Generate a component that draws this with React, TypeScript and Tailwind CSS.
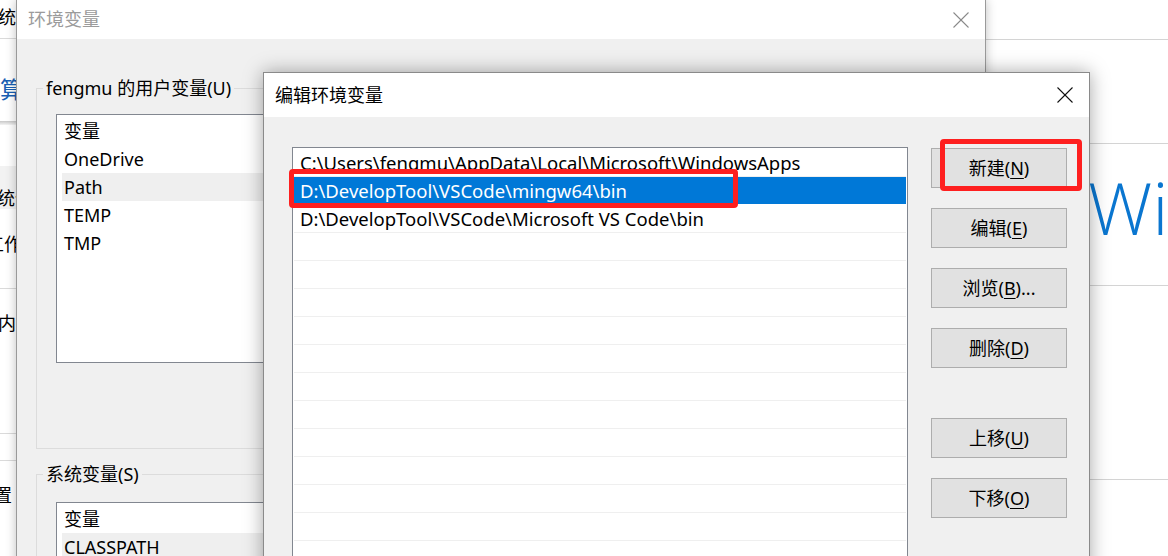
import React from "react";

function CloseX({ color }: { color: string }) {
  return (
    <svg width="16" height="16" viewBox="0 0 16 16" className="block">
      <line x1="0.5" y1="0.5" x2="15.5" y2="15.5" stroke={color} strokeWidth="1.1" />
      <line x1="15.5" y1="0.5" x2="0.5" y2="15.5" stroke={color} strokeWidth="1.1" />
    </svg>
  );
}

function Sidebar() {
  return (
    <div className="w-[16px] shrink-0 overflow-hidden flex flex-col text-[18px] leading-[24px] text-black">
      <div className="h-[39px] shrink-0 flex items-center justify-end whitespace-nowrap border-b border-[#dadada] pb-[4px]">
        系统
      </div>
      <div className="h-[82px] shrink-0 flex items-start pt-[38px] whitespace-nowrap text-[23px] text-[#1a5fb4]">
        算
      </div>
      <div className="h-[4px] shrink-0 bg-gradient-to-b from-[#c8c8c8] to-[#f4f4f4]" />
      <div className="h-[41px] shrink-0" />
      <div className="h-[43px] shrink-0 bg-[#f2f2f2] flex items-start pt-[20px] whitespace-nowrap">
        <span className="ml-[-3px]">统信</span>
      </div>
      <div className="h-[70px] shrink-0 flex items-center whitespace-nowrap">
        <span className="ml-[-14px]">工作</span>
      </div>
      <div className="h-[10px] shrink-0 border-b border-[#dadada]" />
      <div className="h-[68px] shrink-0 flex items-center whitespace-nowrap">
        <span className="ml-[-2px]">内存</span>
      </div>
      <div className="h-[77px] shrink-0 border-b border-[#dadada]" />
      <div className="h-[27px] shrink-0 border-b border-[#dadada]" />
      <div className="h-[68px] shrink-0 flex items-center whitespace-nowrap">
        <span className="ml-[-24px]">设置</span>
      </div>
    </div>
  );
}

function RightBackground() {
  return (
    <div className="flex-1 flex flex-col">
      <div className="h-[40px] shrink-0 border-b border-[#d4d4d4]" />
      <div className="h-[104px] shrink-0 border-b border-[#d4d4d4]" />
      <div className="h-[142px] shrink-0 border-b border-[#d4d4d4] pl-[1072px] pt-[27px] overflow-hidden">
        <div className="text-[72px] leading-[72px] font-light text-[#0a76d0] whitespace-nowrap font-['Open_Sans',sans-serif]">
          Windows 10
        </div>
      </div>
      <div className="h-[194px] shrink-0 border-b border-[#d4d4d4]" />
    </div>
  );
}

function VarList({ rows, selected, height }: { rows: string[]; selected: number; height: number }) {
  return (
    <div
      className="w-[900px] bg-white border border-[#828790] pt-[2px] pl-[5px] overflow-hidden"
      style={{ height }}
    >
      <div className="h-[28px] flex items-center pl-[2px]">变量</div>
      {rows.map((r, i) => (
        <div
          key={r}
          className={
            "h-[28px] flex items-center pl-[2px] " + (i === selected ? "bg-[#efefef]" : "")
          }
        >
          {r}
        </div>
      ))}
    </div>
  );
}

function GroupBox({ label, children, height }: { label: string; children: React.ReactNode; height: number }) {
  return (
    <div className="relative border border-[#dcdcdc] w-[930px]" style={{ height }}>
      <span className="absolute left-[6px] top-[-13px] px-[3px] bg-[#f0f0f0] leading-[24px] whitespace-nowrap">
        {label}
      </span>
      {children}
    </div>
  );
}

function BackWindow() {
  return (
    <div className="absolute left-[16px] top-0 w-[970px] h-[620px] bg-[#f0f0f0] border-l border-r border-[#9a9a9a] shadow-[0_0_10px_rgba(0,0,0,0.25)] flex flex-col text-[18px] text-black">
      <div className="h-[39px] shrink-0 bg-white flex items-center justify-between pl-[11px] pr-[16px]">
        <span className="text-[#9b9b9b]">环境变量</span>
        <CloseX color="#8a8a8a" />
      </div>
      <div className="pl-[19px] pt-[49px] flex flex-col">
        <GroupBox label="fengmu 的用户变量(U)" height={361}>
          <div className="pl-[19px] pt-[25px]">
            <VarList rows={["OneDrive", "Path", "TEMP", "TMP"]} selected={1} height={249} />
          </div>
        </GroupBox>
        <div className="h-[25px]" />
        <GroupBox label="系统变量(S)" height={200}>
          <div className="pl-[19px] pt-[27px]">
            <VarList rows={["CLASSPATH", "ComSpec"]} selected={0} height={160} />
          </div>
        </GroupBox>
      </div>
    </div>
  );
}

function WinButton({ label, mnemonic }: { label: string; mnemonic: string }) {
  const [pre, post] = label.split("(" + mnemonic + ")");
  return (
    <div className="h-[40px] w-[136px] shrink-0 bg-[#e1e1e1] border border-[#adadad] flex items-center justify-center whitespace-nowrap">
      {pre}(<span className="underline underline-offset-[3px] decoration-1">{mnemonic}</span>){post}
    </div>
  );
}

function EditDialog() {
  const paths = [
    "C:\\Users\\fengmu\\AppData\\Local\\Microsoft\\WindowsApps",
    "D:\\DevelopTool\\VSCode\\mingw64\\bin",
    "D:\\DevelopTool\\VSCode\\Microsoft VS Code\\bin",
  ];
  const rows = [...paths, "", "", "", "", "", "", "", "", "", "", "", "", "", ""];
  return (
    <div className="absolute left-[263px] top-[72px] w-[827px] h-[520px] bg-[#f0f0f0] border border-[#8a8a8a] shadow-[0_0_18px_rgba(0,0,0,0.35)] flex flex-col text-[18px] text-black">
      <div className="h-[44px] shrink-0 bg-white flex items-center justify-between pl-[11px] pr-[16px]">
        <span>编辑环境变量</span>
        <CloseX color="#111111" />
      </div>
      <div className="flex pl-[28px] pt-[30px] gap-[23px]">
        <div className="w-[616px] h-[460px] bg-white border border-[#828790] pt-[1px] px-[1px] overflow-hidden text-[18.5px]">
          {rows.map((r, i) => (
            <div
              key={i}
              className={
                "h-[28px] flex items-center pl-[6px] whitespace-nowrap border-b " +
                (i === 1 ? "bg-[#0078d7] text-white border-white" : "border-[#efefef]")
              }
            >
              {r}
            </div>
          ))}
        </div>
        <div className="flex flex-col pt-[1px]">
          <WinButton label="新建(N)" mnemonic="N" />
          <div className="h-[20px]" />
          <WinButton label="编辑(E)" mnemonic="E" />
          <div className="h-[20px]" />
          <WinButton label="浏览(B)..." mnemonic="B" />
          <div className="h-[20px]" />
          <WinButton label="删除(D)" mnemonic="D" />
          <div className="h-[50px]" />
          <WinButton label="上移(U)" mnemonic="U" />
          <div className="h-[20px]" />
          <WinButton label="下移(O)" mnemonic="O" />
        </div>
      </div>
    </div>
  );
}

export default function App() {
  return (
    <div className="relative w-[1168px] h-[556px] overflow-hidden bg-white text-black font-['Noto_Sans','Noto_Sans_CJK_SC',sans-serif]">
      <div className="flex h-full">
        <Sidebar />
        <RightBackground />
      </div>
      <BackWindow />
      <EditDialog />
      <div className="absolute left-[289px] top-[169px] w-[449px] h-[39px] border-[5px] border-[#fe1f1f] rounded-[4px]" />
      <div className="absolute left-[940px] top-[139px] w-[142px] h-[52px] border-[5px] border-[#fe1f1f] rounded-[4px]" />
    </div>
  );
}
